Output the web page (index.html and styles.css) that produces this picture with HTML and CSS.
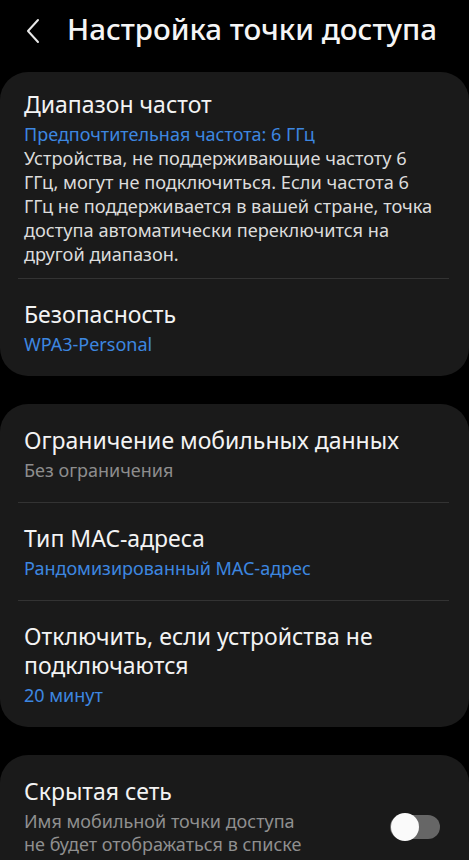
FILE: index.html
```html
<!DOCTYPE html>
<html lang="ru">
<head>
<meta charset="utf-8">
<title>Настройка точки доступа</title>
<link rel="stylesheet" href="styles.css">
</head>
<body>
<header class="topbar">
  <span class="back" aria-label="Назад">
    <svg width="16" height="26" viewBox="0 0 16 26"><path d="M13 2 L3 13 L13 24" fill="none" stroke="#e8e8e8" stroke-width="2" stroke-linecap="round" stroke-linejoin="round"/></svg>
  </span>
  <h1 class="title">Настройка точки доступа</h1>
</header>

<section class="card">
  <div class="item item-first">
    <div class="item-title">Диапазон частот</div>
    <div class="item-sub blue">Предпочтительная частота: 6 ГГц</div>
    <div class="item-desc">Устройства, не поддерживающие частоту 6 ГГц, могут не подключиться. Если частота 6 ГГц не поддерживается в вашей стране, точка доступа автоматически переключится на другой диапазон.</div>
  </div>
  <div class="item">
    <div class="item-title">Безопасность</div>
    <div class="item-sub blue">WPA3-Personal</div>
  </div>
</section>

<section class="card">
  <div class="item">
    <div class="item-title">Ограничение мобильных данных</div>
    <div class="item-sub grey">Без ограничения</div>
  </div>
  <div class="item">
    <div class="item-title">Тип MAC-адреса</div>
    <div class="item-sub blue">Рандомизированный MAC-адрес</div>
  </div>
  <div class="item">
    <div class="item-title">Отключить, если устройства не подключаются</div>
    <div class="item-sub blue">20 минут</div>
  </div>
</section>

<section class="card">
  <div class="item item-switch">
    <div class="switch-text">
      <div class="item-title">Скрытая сеть</div>
      <div class="switch-desc">Имя мобильной точки доступа не будет отображаться в списке доступных сетей Wi-Fi других устройств.</div>
    </div>
    <span class="toggle"><span class="knob"></span></span>
  </div>
</section>
</body>
</html>
```

FILE: styles.css
```css
* { box-sizing: border-box; }
html, body { margin: 0; padding: 0; }
body {
  background: #000;
  color: #f2f2f2;
  font-family: "Noto Sans", "Open Sans", sans-serif;
  width: 469px;
  height: 860px;
  overflow: hidden;
}
.topbar {
  height: 72px;
  display: flex;
  align-items: flex-start;
  padding: 12px 0 0 25px;
}
.back {
  display: flex;
  width: 16px;
  height: 26px;
  margin-top: 6px;
}
.title {
  margin: 0 0 0 26px;
  font-size: 29.5px;
  font-weight: 500;
  line-height: 34px;
  color: #f5f5f5;
  white-space: nowrap;
}
.card {
  background: #1a1a1a;
  border-radius: 28px;
  padding: 0 20px 0 24px;
  margin-bottom: 28px;
}
.item {
  padding: 21px 0 20px;
  border-top: 1px solid #333;
}
.item:first-child { border-top: none; padding-top: 22px; }
.card .item + .item { margin-left: -6px; padding-left: 6px; }
.item.item-first { padding: 18px 0 12px; }
.item-title {
  font-size: 23px;
  line-height: 29px;
  color: #f3f3f3;
  margin-bottom: 3px;
}
.item-sub {
  font-size: 18px;
  line-height: 24px;
}
.blue { color: #3d87e0; }
.grey { color: #8d8d8d; }
.item-desc {
  font-size: 18.2px;
  line-height: 24px;
  color: #dcdcdc;
  padding-right: 12px;
}
.item-switch {
  display: flex;
  align-items: flex-start;
}
.switch-text { width: 288px; }
.switch-desc {
  font-size: 18px;
  line-height: 23px;
  color: #8f8f8f;
  margin-top: 4px;
}
.toggle {
  position: relative;
  margin: 38px 0 0 78px;
  width: 50px;
  height: 24px;
  border-radius: 12px;
  background: #666;
  flex: none;
}
.knob {
  position: absolute;
  left: 1px;
  top: -2px;
  width: 28px;
  height: 28px;
  border-radius: 50%;
  background: #fafafa;
}
```
